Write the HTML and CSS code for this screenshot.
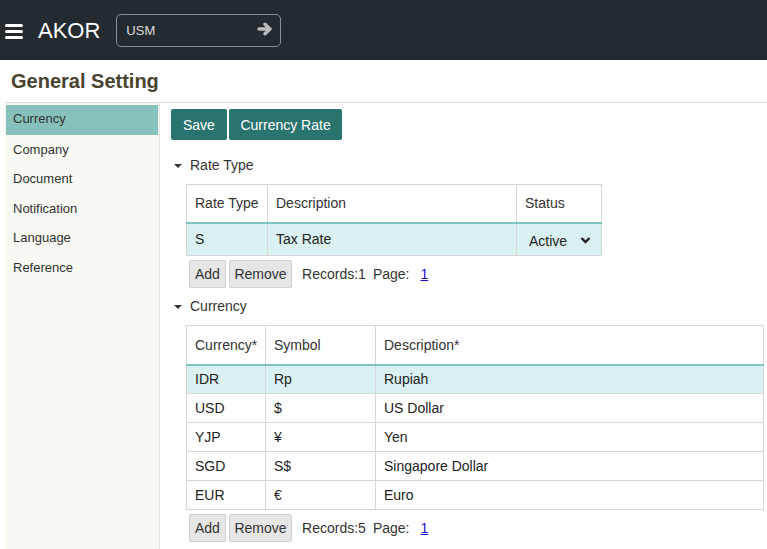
FILE: index.html
```html
<!DOCTYPE html>
<html>
<head>
<meta charset="utf-8">
<link rel="stylesheet" href="styles.css">
</head>
<body>
<header class="topbar">
  <div class="burger"><span></span><span></span><span></span></div>
  <div class="brand">AKOR</div>
  <div class="company-box">
    <span class="company-code">USM</span>
    <svg class="go" width="16" height="14" viewBox="0 0 16 14"><path d="M2 7H13M8 2.2L13 7L8 11.8" fill="none" stroke="#b9bcbd" stroke-width="3.4" stroke-linecap="round" stroke-linejoin="round"/></svg>
  </div>
</header>
<div class="page">
  <h1 class="page-title">General Setting</h1>
  <div class="layout">
    <nav class="sidebar">
      <div class="nav-item active">Currency</div>
      <div class="nav-item">Company</div>
      <div class="nav-item">Document</div>
      <div class="nav-item">Notification</div>
      <div class="nav-item">Language</div>
      <div class="nav-item">Reference</div>
    </nav>
    <main class="main">
      <div class="toolbar">
        <button class="btn-primary">Save</button>
        <button class="btn-primary">Currency Rate</button>
      </div>

      <div class="section-head first"><span class="caret"></span>Rate Type</div>
      <table class="grid grid-rate">
        <thead>
          <tr><th class="c-rt">Rate Type</th><th class="c-rd">Description</th><th class="c-rs">Status</th></tr>
        </thead>
        <tbody>
          <tr class="sel tall"><td>S</td><td>Tax Rate</td><td><span class="status">Active<svg width="11" height="8" viewBox="0 0 11 8"><path d="M1.5 2L5.5 6L9.5 2" fill="none" stroke="#222" stroke-width="2.4"/></svg></span></td></tr>
        </tbody>
      </table>
      <div class="pager">
        <button class="btn">Add</button>
        <button class="btn">Remove</button>
        <span class="rec">Records:1</span>
        <span class="pg">Page:</span>
        <a class="pg-link" href="#">1</a>
      </div>

      <div class="section-head"><span class="caret"></span>Currency</div>
      <table class="grid grid-cur">
        <thead>
          <tr><th class="c-cc">Currency*</th><th class="c-cs">Symbol</th><th>Description*</th></tr>
        </thead>
        <tbody>
          <tr class="sel"><td>IDR</td><td>Rp</td><td>Rupiah</td></tr>
          <tr><td>USD</td><td>$</td><td>US Dollar</td></tr>
          <tr><td>YJP</td><td>¥</td><td>Yen</td></tr>
          <tr><td>SGD</td><td>S$</td><td>Singapore Dollar</td></tr>
          <tr><td>EUR</td><td>€</td><td>Euro</td></tr>
        </tbody>
      </table>
      <div class="pager">
        <button class="btn">Add</button>
        <button class="btn">Remove</button>
        <span class="rec">Records:5</span>
        <span class="pg">Page:</span>
        <a class="pg-link" href="#">1</a>
      </div>
    </main>
  </div>
</div>
</body>
</html>
```
FILE: styles.css
```css
* { box-sizing: border-box; }
html, body { margin: 0; padding: 0; }
body {
  font-family: "Liberation Sans", Arial, sans-serif;
  color: #333;
  background: #fff;
  width: 767px;
  height: 549px;
  overflow: hidden;
}
.topbar {
  height: 60px;
  background: #232b30;
  display: flex;
  align-items: center;
  padding-left: 5px;
}
.burger {
  width: 18px;
  display: flex;
  flex-direction: column;
  gap: 3px;
  margin-top: 2px;
}
.burger span {
  display: block;
  height: 3px;
  border-radius: 1.5px;
  background: #fff;
}
.brand {
  color: #fff;
  font-size: 22px;
  margin-left: 15px;
  margin-top: 1px;
}
.company-box {
  margin-left: 16px;
  width: 165px;
  height: 33px;
  border: 1px solid #8c9194;
  border-radius: 5px;
  display: flex;
  align-items: center;
  justify-content: space-between;
  padding: 0 7px 0 9px;
}
.company-code {
  color: #dcdcdc;
  font-size: 13px;
}
.go { display: block; margin-top: -2px; }
.page { padding-left: 5px; }
.page-title {
  margin: 0;
  height: 43px;
  padding: 10px 0 0 6px;
  font-size: 20px;
  font-weight: bold;
  color: #4a4330;
  border-bottom: 1px solid #dedede;
}
.layout {
  display: flex;
  height: 446px;
}
.sidebar {
  width: 155px;
  background: #f7f9f2;
  border-right: 1px solid #e4e6e0;
  padding-top: 2px;
  flex: none;
}
.nav-item {
  height: 29.5px;
  line-height: 29px;
  font-size: 13px;
  padding-left: 7px;
  color: #333;
  margin-right: 1px;
  margin-left: 1px;
}
.nav-item.active {
  background: #86c1bb;
  line-height: 28px;
}
.main {
  padding-left: 11px;
  padding-top: 6px;
  flex: 1;
}
.toolbar {
  display: flex;
  gap: 2px;
}
.btn-primary {
  font-family: inherit;
  font-size: 14px;
  color: #fff;
  background: #29746f;
  border: none;
  border-radius: 2px;
  height: 31px;
  padding: 0 12px;
}
.btn-primary + .btn-primary { padding: 0 11.5px; }
.section-head {
  display: flex;
  align-items: center;
  font-size: 14px;
  height: 20px;
  margin-top: 8px;
  margin-bottom: 9px;
  padding-left: 3px;
}
.section-head.first { margin-top: 15px; }
.caret {
  width: 0;
  height: 0;
  border-left: 4px solid transparent;
  border-right: 4px solid transparent;
  border-top: 4.5px solid #333;
  margin-right: 8px;
  margin-top: 2px;
}
.grid {
  border-collapse: collapse;
  margin-left: 15px;
  font-size: 14px;
}
.grid-rate { width: 416px; }
.grid-cur { width: 578px; }
.grid th, .grid td {
  border: 1px solid #d6d6d6;
  text-align: left;
  font-weight: normal;
  padding: 0 0 0 8px;
  color: #333;
}
.grid th {
  height: 38px;
  border-bottom: 2px solid #7fc4c2;
  vertical-align: middle;
}
.grid-cur th { height: 39px; }
.grid td {
  height: 29px;
  color: #222;
}
.grid tr.tall td { height: 33px; }
.grid tr.sel td { background: #d9f1f1; }
.c-rt { width: 81px; }
.c-rd { width: 249px; }
.c-cc { width: 79px; }
.c-cs { width: 110px; }
.status {
  display: inline-flex;
  align-items: center;
  gap: 13px;
  margin-left: 4px;
  margin-top: 3px;
}
.status svg { margin-top: -1px; }
.pager {
  display: flex;
  align-items: center;
  margin-left: 18px;
  margin-top: 4px;
  height: 28px;
  font-size: 14px;
}
.btn {
  font-family: inherit;
  font-size: 14px;
  color: #333;
  background: #e6e6e6;
  border: 1px solid #cfcfcf;
  border-radius: 2px;
  height: 28px;
  padding: 0 5px;
  margin-right: 3px;
}
.btn + .btn { padding: 0 4.5px; }
.rec { margin-left: 7px; }
.pg { margin-left: 7px; }
.pg-link {
  margin-left: 11px;
  color: #1a0dcc;
  text-decoration: underline;
}
```
